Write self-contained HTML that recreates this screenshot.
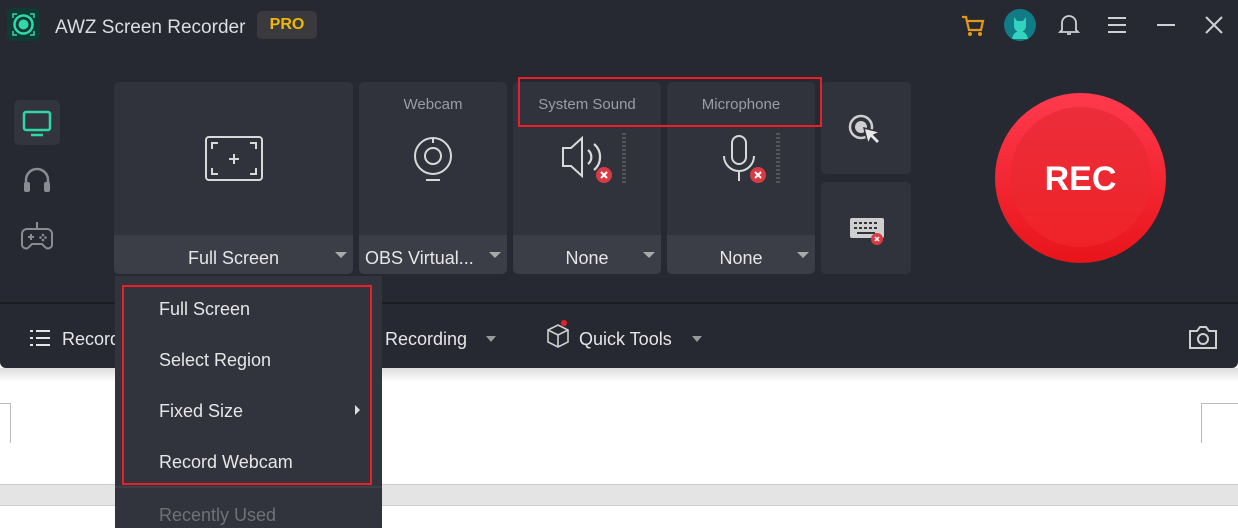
<!DOCTYPE html>
<html><head><meta charset="utf-8"><style>
*{margin:0;padding:0;box-sizing:border-box}
html,body{width:1238px;height:528px;overflow:hidden}
body{background:#fff;font-family:"Liberation Sans",sans-serif;position:relative}
.abs{position:absolute}
.app{left:0;top:0;width:1238px;height:368px;background:#262932;border-radius:0 0 6px 6px}
.card{background:#30333c;border-radius:5px;position:absolute;overflow:hidden}
.card .bot{position:absolute;left:0;right:0;bottom:0;height:39px;background:#3b3e47;color:#e6e6e6;font-size:18px;text-align:center;line-height:46px}
.card .lab{position:absolute;top:14px;left:0;right:0;text-align:center;color:#9a9da6;font-size:15px}
.tri{position:absolute;right:6px;top:17px;width:0;height:0;border-left:6px solid transparent;border-right:6px solid transparent;border-top:6px solid #aaa}
.menu{left:115px;top:276px;width:267px;height:260px;background:#32343d}
.menu div{position:absolute;left:44px;color:#e6e6e6;font-size:18px}
.t{color:#e6e6e6;font-size:18px}
</style></head><body>
<div class="abs app"></div>
<div class="abs" style="left:7px;top:8px;width:33px;height:33px;background:#0f3b34;border-radius:5px"></div>
<svg class="abs" style="left:7px;top:8px" width="33" height="33"><circle cx="16.5" cy="16.5" r="9" fill="none" stroke="#32d8a8" stroke-width="2.5"/><circle cx="16.5" cy="16.5" r="5" fill="#32d8a8"/><path d="M6 10V6h4M27 10V6h-4M6 23v4h4M27 23v4h-4" stroke="#32d8a8" stroke-width="1.5" fill="none"/></svg>
<div class="abs" style="left:55px;top:17px;color:#dcdde0;font-size:19px">AWZ Screen Recorder</div>
<div class="abs" style="left:257px;top:11px;width:60px;height:28px;background:#3a3a3e;border-radius:5px;color:#f2b705;font-weight:bold;font-size:16px;text-align:center;line-height:28px">PRO</div>
<svg class="abs" style="left:960px;top:14px" width="26" height="24"><path d="M2 3h4l3 13h12l2-9H8" fill="none" stroke="#e19a1a" stroke-width="2.2"/><circle cx="10" cy="20" r="2" fill="#e19a1a"/><circle cx="20" cy="20" r="2" fill="#e19a1a"/></svg>
<div class="abs" style="left:1004px;top:9px;width:32px;height:32px;border-radius:50%;background:#117b86"></div>
<svg class="abs" style="left:1004px;top:9px" width="32" height="32"><path d="M10 8l3 4h6l3-4v9a6 6 0 01-12 0z" fill="#34d3c0"/><path d="M8 30c1-6 5-8 8-8s7 2 8 8z" fill="#34d3c0"/></svg>
<svg class="abs" style="left:1058px;top:13px" width="22" height="24"><path d="M4 17V10a7 7 0 0114 0v7l2 2H2z M9 21h4" fill="none" stroke="#cfd0d4" stroke-width="1.8"/></svg>
<svg class="abs" style="left:1107px;top:16px" width="20" height="18"><path d="M1 2h18M1 9h18M1 16h18" stroke="#cfd0d4" stroke-width="2"/></svg>
<div class="abs" style="left:1157px;top:24px;width:18px;height:2px;background:#cfd0d4"></div>
<svg class="abs" style="left:1204px;top:15px" width="20" height="20"><path d="M2 2l16 16M18 2L2 18" stroke="#cfd0d4" stroke-width="2"/></svg>
<div class="abs" style="left:14px;top:100px;width:46px;height:45px;background:#32353e;border-radius:5px"></div>
<svg class="abs" style="left:22px;top:110px" width="30" height="28"><rect x="2" y="2" width="26" height="18" rx="2" fill="none" stroke="#2fd7a6" stroke-width="2.5"/><path d="M9 25h12" stroke="#2fd7a6" stroke-width="2.5"/></svg>
<svg class="abs" style="left:22px;top:166px" width="30" height="28"><path d="M4 22v-8a11 11 0 0122 0v8" fill="none" stroke="#8a8c93" stroke-width="2.5"/><rect x="2" y="16" width="6" height="10" rx="2" fill="#8a8c93"/><rect x="22" y="16" width="6" height="10" rx="2" fill="#8a8c93"/></svg>
<svg class="abs" style="left:20px;top:220px" width="34" height="32"><path d="M17 2v6M7 9h20a5 5 0 015 5v10a4 4 0 01-7 3l-3-3H12l-3 3a4 4 0 01-7-3V14a5 5 0 015-5z" fill="none" stroke="#8a8c93" stroke-width="2"/><path d="M8 17h6M11 14v6" stroke="#8a8c93" stroke-width="2"/><circle cx="23" cy="15" r="1.3" fill="#8a8c93"/><circle cx="23" cy="20" r="1.3" fill="#8a8c93"/><circle cx="20.5" cy="17.5" r="1.3" fill="#8a8c93"/><circle cx="25.5" cy="17.5" r="1.3" fill="#8a8c93"/></svg>
<div class="card" style="left:114px;top:82px;width:239px;height:192px"><div class="bot">Full Screen<span class="tri"></span></div></div>
<svg class="abs" style="left:204px;top:135px" width="60" height="48"><rect x="2" y="2" width="56" height="43" rx="3" fill="none" stroke="#d9d9d9" stroke-width="2"/><path d="M8 14V8h6M52 14V8h-6M8 33v6h6M52 33v6h-6M30 19v10M25 24h10" stroke="#d9d9d9" stroke-width="2" fill="none"/></svg>
<div class="card" style="left:359px;top:82px;width:148px;height:192px"><div class="lab">Webcam</div><div class="bot" style="text-align:left;padding-left:6px">OBS Virtual...<span class="tri"></span></div></div>
<svg class="abs" style="left:413px;top:135px" width="40" height="48"><circle cx="20" cy="21" r="18" fill="none" stroke="#d9d9d9" stroke-width="2"/><circle cx="20" cy="21" r="8" fill="none" stroke="#d9d9d9" stroke-width="2"/><path d="M20 3v5M13 45h14" stroke="#d9d9d9" stroke-width="2"/></svg>
<div class="card" style="left:513px;top:82px;width:148px;height:192px"><div class="lab">System Sound</div><div class="bot">None<span class="tri"></span></div></div>
<svg class="abs" style="left:560px;top:135px" width="60" height="48"><path d="M3 13h8l11-10v38L11 31H3z" fill="none" stroke="#d9d9d9" stroke-width="2"/><path d="M28 15a9 9 0 010 14M34 9a17 17 0 010 26" fill="none" stroke="#d9d9d9" stroke-width="2.2"/><circle cx="44" cy="40" r="8" fill="#d93b45"/><path d="M41 37l6 6M47 37l-6 6" stroke="#fff" stroke-width="2"/></svg>
<div class="abs" style="left:622px;top:133px;width:4px;height:50px;background:repeating-linear-gradient(#555 0 2px,transparent 2px 4px)"></div>
<div class="card" style="left:667px;top:82px;width:148px;height:192px"><div class="lab">Microphone</div><div class="bot">None<span class="tri"></span></div></div>
<svg class="abs" style="left:720px;top:135px" width="50" height="48"><rect x="12" y="1" width="14" height="28" rx="7" fill="none" stroke="#d9d9d9" stroke-width="2"/><path d="M4 21a15 15 0 0030 0M19 36v10" fill="none" stroke="#d9d9d9" stroke-width="2"/><circle cx="38" cy="40" r="8" fill="#d93b45"/><path d="M35 37l6 6M41 37l-6 6" stroke="#fff" stroke-width="2"/></svg>
<div class="abs" style="left:776px;top:133px;width:4px;height:50px;background:repeating-linear-gradient(#555 0 2px,transparent 2px 4px)"></div>
<div class="card" style="left:821px;top:82px;width:90px;height:92px"></div>
<svg class="abs" style="left:848px;top:114px" width="36" height="34"><circle cx="13" cy="13" r="11" fill="none" stroke="#cfcfcf" stroke-width="2.5"/><circle cx="13" cy="13" r="6" fill="#cfcfcf"/><path d="M16 14l4 16 3-6 6 6 3-3-6-6 6-3z" fill="#e8e8e8" stroke="#30333c" stroke-width="1.5"/></svg>
<div class="card" style="left:821px;top:182px;width:90px;height:92px"></div>
<svg class="abs" style="left:849px;top:216px" width="36" height="30"><rect x="1" y="2" width="34" height="20" rx="2" fill="#cfcfcf"/><path d="M5 7h3M10 7h3M15 7h3M20 7h3M25 7h3M5 12h3M10 12h3M15 12h3M20 12h3M25 12h3M8 17h18" stroke="#30333c" stroke-width="2"/><circle cx="28" cy="23" r="6" fill="#d93b45"/><path d="M26 21l4 4M30 21l-4 4" stroke="#fff" stroke-width="1.5"/></svg>
<div class="abs" style="left:995px;top:93px;width:171px;height:170px;border-radius:50%;background:linear-gradient(#ff3a4e,#e8141a);"></div>
<div class="abs" style="left:1010px;top:107px;width:141px;height:140px;border-radius:50%;background:linear-gradient(#ec2d3a,#ee2328)"></div>
<div class="abs" style="left:995px;top:160px;width:171px;text-align:center;color:#fff;font-weight:bold;font-size:34px">REC</div>
<div class="abs" style="left:518px;top:77px;width:304px;height:50px;border:2px solid #e8202a"></div>
<div class="abs" style="left:0;top:302px;width:1238px;height:2px;background:#1b1d23"></div>
<svg class="abs" style="left:29px;top:329px" width="22" height="18"><path d="M1 2h3M1 9h3M1 16h3M7 2h14M7 9h14M7 16h14" stroke="#e6e6e6" stroke-width="2"/></svg>
<div class="abs t" style="left:62px;top:329px">Record</div>
<div class="abs t" style="left:385px;top:329px">Recording</div>
<div class="abs" style="left:486px;top:336px;border-left:5px solid transparent;border-right:5px solid transparent;border-top:6px solid #999"></div>
<svg class="abs" style="left:545px;top:318px" width="26" height="32"><path d="M3 12l10-5 10 5v12l-10 5-10-5zM3 12l10 5 10-5M13 17v12" fill="none" stroke="#d0d0d0" stroke-width="1.6"/><circle cx="19" cy="5" r="3" fill="#e8202a"/></svg>
<div class="abs t" style="left:579px;top:329px">Quick Tools</div>
<div class="abs" style="left:692px;top:336px;border-left:5px solid transparent;border-right:5px solid transparent;border-top:6px solid #999"></div>
<svg class="abs" style="left:1188px;top:324px" width="30" height="26"><path d="M2 7h7l3-4h6l3 4h7v17H2z" fill="none" stroke="#cfcfcf" stroke-width="2"/><circle cx="15" cy="15" r="5" fill="none" stroke="#cfcfcf" stroke-width="2"/></svg>
<div class="abs" style="left:0;top:368px;width:1238px;height:14px;background:linear-gradient(#ddd,#fff)"></div>
<div class="abs" style="left:0;top:403px;width:11px;height:40px;border:1px solid #bbb;border-left:none;border-bottom:none"></div>
<div class="abs" style="left:1201px;top:403px;width:40px;height:40px;border:1px solid #bbb;border-right:none;border-bottom:none"></div>
<div class="abs" style="left:0;top:484px;width:1238px;height:22px;background:#e4e4e4;border-top:1px solid #ccc;border-bottom:1px solid #ccc"></div>
<div class="abs menu">
<div style="top:23px">Full Screen</div>
<div style="top:74px">Select Region</div>
<div style="top:125px">Fixed Size</div>
<div style="top:176px">Record Webcam</div>
<div style="top:229px;color:#6f7178">Recently Used</div>
</div>
<div class="abs" style="left:355px;top:405px;border-top:5px solid transparent;border-bottom:5px solid transparent;border-left:5px solid #ddd"></div>
<div class="abs" style="left:115px;top:486px;width:267px;height:2px;background:#3c3f48"></div>
<div class="abs" style="left:122px;top:285px;width:250px;height:200px;border:2px solid #e8202a"></div>
</body></html>
